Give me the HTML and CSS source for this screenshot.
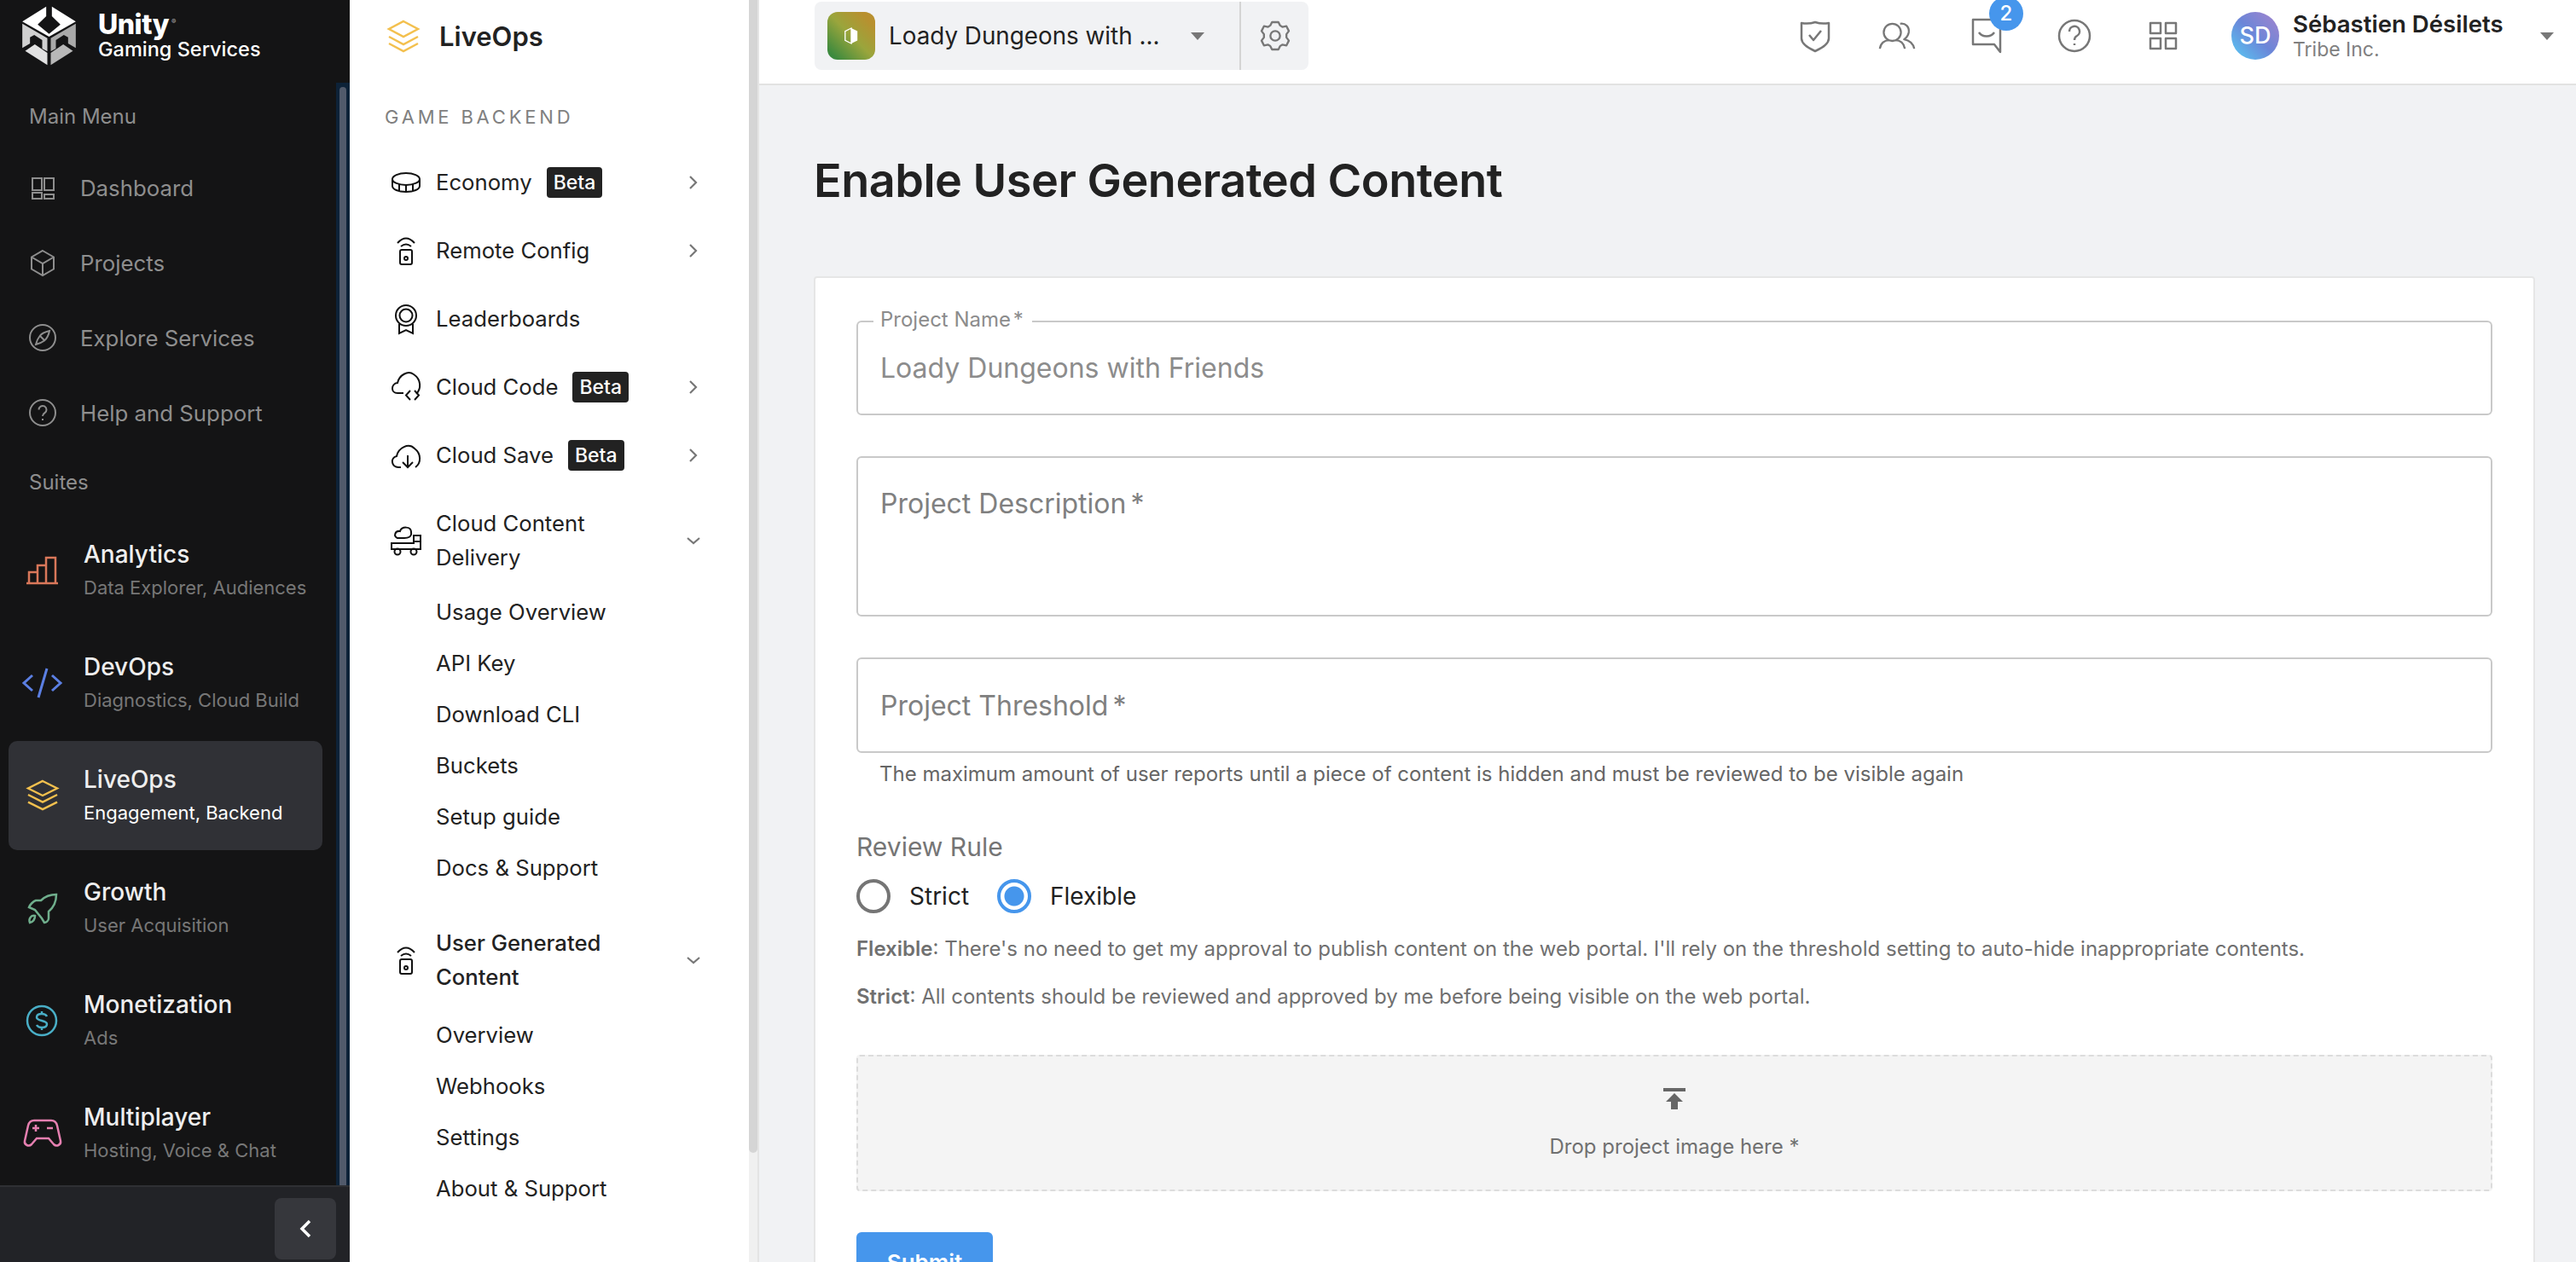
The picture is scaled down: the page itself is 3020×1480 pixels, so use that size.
FILE: index.html
```html
<!DOCTYPE html>
<html lang="en">
<head>
    <meta charset="UTF-8">
    <title>Enable User Generated Content</title>
    <link rel="stylesheet" href="styles.css">
</head>
<body>
    <!-- Main sidebar -->
    <aside class="side">
        <div class="brand">
            <svg class="brand-logo" viewBox="18 20 188 210">
                <path fill="#fff" d="M18 75L102 22V56L72 85L112 118L152 85L122 56V22L206 75L112 128Z"/>
                <path fill="#d0d0d0" d="M18 82L106 133V180L88 170V140L60 122L45 130V152L18 168Z"/>
                <path fill="#a9a9a9" d="M206 82L118 133V180L136 170V140L164 122L179 130V152L206 168Z"/>
                <path fill="#e2e2e2" d="M28 178L62 155L106 185V228Z"/>
                <path fill="#b8b8b8" d="M196 178L162 155L118 185V228Z"/>
            </svg>
            <div class="brand-text">
                <span class="brand-name">Unity<sup class="brand-reg">®</sup></span>
                <span class="brand-sub">Gaming Services</span>
            </div>
        </div>

        <div class="side-scroll">
            <div class="side-label side-label-first">Main Menu</div>
            <a class="side-link">
                <svg viewBox="0 0 32 32" class="side-icon"><path d="M4 5h11v14H4zM18 5h11v14H18zM4 22h11v7H4zM18 24h11v5H18z"/></svg>
                Dashboard
            </a>
            <a class="side-link">
                <svg viewBox="0 0 32 32" class="side-icon"><path d="M16 2l13 7.500v14L16 31 3 23.500v-14zM3 9.500l13 7.500 13-7.500M16 17v14"/></svg>
                Projects
            </a>
            <a class="side-link">
                <svg viewBox="0 0 32 32" class="side-icon"><circle cx="16" cy="16" r="15"/><path d="M24 8c-1 5-3 9-6 11.500-2 1.500-6 3.500-10 4.500 1-4 3-8 5-10.500C15 11 20 9 24 8zM13 14l5 5"/></svg>
                Explore Services
            </a>
            <a class="side-link">
                <svg viewBox="0 0 32 32" class="side-icon"><circle cx="16" cy="16" r="15"/><path d="M11.500 12.500a4.500 4.500 0 1 1 7 3.700c-1.700 1.100-2.500 1.900-2.500 3.800M16 23v2"/></svg>
                Help and Support
            </a>
            <div class="side-label">Suites</div>

            <a class="suite">
                <svg viewBox="0 0 44 36" class="suite-icon" stroke="#d9775a"><path d="M3 33h37M6 33V20h10v13M16 33V12h10v21M26 33V3h11v30"/></svg>
                <div><div class="suite-name">Analytics</div><div class="suite-desc">Data Explorer, Audiences</div></div>
            </a>
            <a class="suite">
                <svg viewBox="0 0 44 36" class="suite-icon suite-icon-bold" stroke="#5b7fe3"><path d="M10 9L0 18l10 9M33 9l10 9-10 9M27 1L17 35"/></svg>
                <div><div class="suite-name">DevOps</div><div class="suite-desc">Diagnostics, Cloud Build</div></div>
            </a>
            <a class="suite suite-active">
                <svg viewBox="0 0 44 38" class="suite-icon" stroke="#f3c04e"><path d="M22 1l18 9-18 9-18-9zM4 18l18 9 18-9M4 27l18 9 18-9"/></svg>
                <div><div class="suite-name">LiveOps</div><div class="suite-desc">Engagement, Backend</div></div>
            </a>
            <a class="suite">
                <svg viewBox="0 0 44 36" class="suite-icon" stroke="#6fae8c"><path d="M38 2c0 8-3 15-9 20v8c0 3-3 5-5 5l-3-5-8-10-7-3c1-3 5-7 8-8h6c5-5 11-7 18-7zM7 35c-2-5 2-9 6-8 0 4-2 7-6 8z"/></svg>
                <div><div class="suite-name">Growth</div><div class="suite-desc">User Acquisition</div></div>
            </a>
            <a class="suite">
                <svg viewBox="0 0 44 36" class="suite-icon" stroke="#49aec6"><circle cx="21" cy="18" r="17"/><path d="M27 13c-1-2-3-3-6-3-3 0-6 1-6 4 0 5 12 3 12 8 0 3-3 4-6 4-3 0-5-1-6-3M21 7v3M21 26v3"/></svg>
                <div><div class="suite-name">Monetization</div><div class="suite-desc">Ads</div></div>
            </a>
            <a class="suite">
                <svg viewBox="0 0 44 36" class="suite-icon" stroke="#e57fb0"><path d="M12 3h20c4 0 6 2 7 6l4 18c1 5-5 7-8 4l-6-7H15l-6 7c-3 3-9 1-8-4L5 9c1-4 3-6 7-6zM10 12h8M14 8v8M27 12h7"/></svg>
                <div><div class="suite-name">Multiplayer</div><div class="suite-desc">Hosting, Voice &amp; Chat</div></div>
            </a>
        </div>

        <div class="side-foot">
            <button class="collapse">
                <svg viewBox="0 0 16 24" width="16" height="24"><path d="M13 3L4 12l9 9" fill="none" stroke="#fff" stroke-width="3.500"/></svg>
            </button>
        </div>
    </aside>

    <!-- Service sidebar -->
    <nav class="sub">
        <div class="sub-inner">
            <div class="sub-head">
                <svg viewBox="0 0 40 40" class="sub-logo"><path d="M20 3l17 9-17 9-17-9zM3 21l17 9 17-9M3 29l17 9 17-9"/></svg>
                LiveOps
            </div>
            <div class="sub-label">GAME BACKEND</div>

            <a class="item">
                <svg viewBox="0 0 36 36" class="item-icon"><ellipse cx="18" cy="14" rx="16" ry="7"/><path d="M2 14v8c0 4 7 7 16 7s16-3 16-7v-8M10 20v8M18 21v8M26 20v8"/></svg>
                <span>Economy</span><span class="beta">Beta</span>
                <svg viewBox="0 0 16 16" class="chev"><path d="M4 1l7 7-7 7"/></svg>
            </a>
            <a class="item">
                <svg viewBox="0 0 36 36" class="item-icon"><path d="M8 9Q18-2 28 9M12 13Q18 8 24 13"/><rect x="11" y="17" width="14" height="17" rx="2"/><circle cx="18" cy="27" r="2"/></svg>
                <span>Remote Config</span>
                <svg viewBox="0 0 16 16" class="chev"><path d="M4 1l7 7-7 7"/></svg>
            </a>
            <a class="item">
                <svg viewBox="0 0 36 36" class="item-icon"><circle cx="18" cy="14" r="12"/><circle cx="18" cy="14" r="7.500"/><path d="M10 24v11l8-4 8 4V24"/></svg>
                <span>Leaderboards</span>
            </a>
            <a class="item">
                <svg viewBox="0 0 36 36" class="item-icon"><path d="M15 25H8C0 25 0 14 8 13 10 4 20-2 27 3c9 6 9 17 3 23M23 22l-5 5.500 5 5.500M28 22l5 5.500-5 5.500"/></svg>
                <span>Cloud Code</span><span class="beta">Beta</span>
                <svg viewBox="0 0 16 16" class="chev"><path d="M4 1l7 7-7 7"/></svg>
            </a>
            <a class="item">
                <svg viewBox="0 0 36 36" class="item-icon"><path d="M12 32H9C1 32-1 21 7 19 9 9 21 3 28 10c8 6 8 17 1 22M20 18v14M14 26l6 6 6-6"/></svg>
                <span>Cloud Save</span><span class="beta">Beta</span>
                <svg viewBox="0 0 16 16" class="chev"><path d="M4 1l7 7-7 7"/></svg>
            </a>
            <a class="item item-open">
                <svg viewBox="0 0 36 36" class="item-icon"><path d="M8 15C3 13 5 6 11 7c2-6 13-6 13 1 1 6-4 7-8 7zM1 21h26V12h8v16H1zM27 19h8"/><circle cx="8" cy="31" r="3.500"/><circle cx="27" cy="31" r="3.500"/></svg>
                <span>Cloud Content Delivery</span>
                <svg viewBox="0 0 16 16" class="chev chev-down"><path d="M1 5l7 6 7-6"/></svg>
            </a>
            <div class="sublist">
                <a>Usage Overview</a>
                <a>API Key</a>
                <a>Download CLI</a>
                <a>Buckets</a>
                <a>Setup guide</a>
                <a>Docs &amp; Support</a>
            </div>
            <a class="item item-open item-current">
                <svg viewBox="0 0 36 36" class="item-icon"><path d="M8 9Q18-2 28 9M12 13Q18 8 24 13"/><rect x="11" y="17" width="14" height="17" rx="2"/><circle cx="18" cy="27" r="2"/></svg>
                <span>User Generated Content</span>
                <svg viewBox="0 0 16 16" class="chev chev-down"><path d="M1 5l7 6 7-6"/></svg>
            </a>
            <div class="sublist sublist-last">
                <a>Overview</a>
                <a>Webhooks</a>
                <a>Settings</a>
                <a>About &amp; Support</a>
            </div>
        </div>
        <div class="sub-scroll"><div class="sub-thumb"></div></div>
    </nav>

    <div class="main">
        <header class="top">
            <div class="picker">
                <div class="picker-left">
                    <div class="project-icon">
                        <svg viewBox="0 0 20 22" width="18" height="20"><path d="M10 1l8 4v12l-8 4z" fill="#fff"/><path d="M10 1L2 5v12l8 4z" fill="none" stroke="#fff" stroke-width="1.500"/></svg>
                    </div>
                    <span class="picker-name">Loady Dungeons with ...</span>
                    <span class="caret"></span>
                </div>
                <div class="picker-gear">
                    <svg viewBox="0 0 34 38" width="32" height="36" class="top-icon"><path d="M13 2h8l2 4c1 1 2 1 3 2l5-1 3 6-3 4v4l3 4-3 6-5-1c-1 1-2 1-3 2l-2 4h-8l-2-4c-1-1-2-1-3-2l-5 1-3-6 3-4v-4L0 13l3-6 5 1c1-1 2-1 3-2z"/><circle cx="17" cy="19" r="6"/></svg>
                </div>
            </div>

            <div class="top-right">
                <svg viewBox="0 0 36 38" width="36" height="38" class="top-icon icon-shield"><path d="M2 4c5 1 10 1 16-1 6 2 11 2 16 1v18c0 6-7 11-16 15C9 33 2 28 2 22z"/><path d="M11 18l5 6 9-11"/></svg>
                <svg viewBox="0 0 48 36" width="44" height="33" class="top-icon icon-users"><circle cx="18" cy="13" r="11"/><path d="M2 34c1-7 6-11 12-11M34 34c-1-7-6-11-12-11M28 2c7-1 12 4 11 11-1 5-3 7-6 9 7 1 12 6 13 12"/></svg>
                <div class="chat">
                    <svg viewBox="0 0 36 42" width="36" height="42" class="top-icon"><path d="M2 2h32v38l-7-9H2zM9 17c4 6 14 6 18 0"/></svg>
                    <span class="chat-badge">2</span>
                </div>
                <svg viewBox="0 0 40 40" width="40" height="40" class="top-icon icon-help"><circle cx="20" cy="20" r="18"/><path d="M14 15a6 6 0 1 1 9 5c-2 1-3 2-3 5M20 29v2"/></svg>
                <svg viewBox="0 0 34 34" width="34" height="34" class="top-icon icon-grid"><path d="M2 2h12v12H2zM20 2h12v12H20zM2 20h12v12H2zM20 20h12v12H20z"/></svg>
                <div class="user">
                    <div class="avatar">SD</div>
                    <div class="user-text">
                        <div class="user-name">Sébastien Désilets</div>
                        <div class="user-org">Tribe Inc.</div>
                    </div>
                    <span class="caret"></span>
                </div>
            </div>
        </header>

        <main class="content">
            <h1 class="title">Enable User Generated Content</h1>
            <form class="card">
                <div class="field field-name">
                    <span class="field-legend">Project Name <span class="req">*</span></span>
                    Loady Dungeons with Friends
                </div>
                <div class="field field-desc"><span>Project Description <span class="req">*</span></span></div>
                <div class="field field-threshold"><span>Project Threshold <span class="req">*</span></span></div>
                <p class="helper">The maximum amount of user reports until a piece of content is hidden and must be reviewed to be visible again</p>

                <div class="rule-title">Review Rule</div>
                <div class="radios">
                    <span class="radio"></span><span class="radio-label">Strict</span>
                    <span class="radio radio-on"></span><span class="radio-label">Flexible</span>
                </div>
                <p class="rule-note"><b>Flexible</b>: There's no need to get my approval to publish content on the web portal. I'll rely on the threshold setting to auto-hide inappropriate contents.</p>
                <p class="rule-note"><b>Strict</b>: All contents should be reviewed and approved by me before being visible on the web portal.</p>

                <div class="drop">
                    <svg viewBox="0 0 28 28" width="28" height="28"><path d="M1 2h26v4H1zM14 8l10 10h-6v9h-8v-9H4z" fill="#666"/></svg>
                    <span>Drop project image here *</span>
                </div>
                <button type="button" class="submit">Submit</button>
            </form>
        </main>
    </div>
</body>
</html>
```

FILE: styles.css
```css
* {
    box-sizing: border-box;
}
html, body {
    margin: 0;
    height: 1480px;
    overflow: hidden;
}
body {
    display: flex;
    font-family: Inter, "Liberation Sans", sans-serif;
    color: #222;
    background-color: #f1f2f4;
}
svg {
    flex: none;
    display: block;
    overflow: visible;
}

/* main sidebar */
.side {
    width: 410px;
    flex: none;
    height: 1480px;
    background-color: #141415;
    display: flex;
    flex-direction: column;
}
.brand {
    height: 97px;
    flex: none;
    display: flex;
    align-items: flex-start;
    padding: 7px 0 0 26px;
}
.brand-logo {
    width: 63px;
    height: 70px;
}
.brand-text {
    margin: 5px 0 0 26px;
    display: flex;
    flex-direction: column;
    color: #fff;
}
.brand-name {
    font-size: 32px;
    font-weight: 800;
    line-height: 34px;
    letter-spacing: -0.5px;
}
.brand-reg {
    font-size: 8px;
    font-weight: 400;
    line-height: 0;
    margin-left: 3px;
    color: #bbb;
}
.brand-sub {
    font-size: 23.500px;
    font-weight: 500;
    line-height: 24px;
}
.side-scroll {
    height: 1293px;
    flex: none;
    padding-right: 16px;
    background: linear-gradient(#0d2238, #0d2238) right top / 16px 100% no-repeat;
    position: relative;
}
.side-scroll::after {
    content: "";
    position: absolute;
    top: 5px;
    bottom: 0;
    right: 4px;
    width: 8px;
    border-radius: 4px 4px 0 0;
    background-color: #515a6b;
}
.side-label {
    color: #8e8e8e;
    font-size: 24px;
    line-height: 30px;
    padding-left: 34px;
    margin-top: 23px;
    margin-bottom: 24px;
}
.side-label-first {
    margin-top: 25px;
    margin-bottom: 24px;
}
.side-link {
    display: flex;
    align-items: center;
    height: 88px;
    padding-left: 34px;
    color: #8e8e8e;
    font-size: 25.800px;
    white-space: nowrap;
}
.side-icon {
    width: 32px;
    height: 32px;
    margin-right: 28px;
    fill: none;
    stroke: #8e8e8e;
    stroke-width: 2;
}
.suite {
    display: flex;
    align-items: center;
    height: 128px;
    margin: 0 16px 4px 10px;
    padding-left: 18px;
    border-radius: 10px;
}
.suite-active {
    background-color: #303136;
}
.suite-icon {
    width: 44px;
    height: 36px;
    margin-right: 26px;
    fill: none;
    stroke-width: 2.500;
}
.suite-icon-bold {
    stroke-width: 3;
}
.suite-name {
    color: #eee;
    font-size: 28px;
    line-height: 36px;
    font-weight: 500;
}
.suite-desc {
    color: #777;
    font-size: 22px;
    line-height: 34px;
    margin-top: 4px;
}
.suite-active .suite-desc {
    color: #fff;
}
.side-foot {
    flex: 1;
    background-color: #222327;
    border-top: 2px solid #2f3034;
    display: flex;
    justify-content: flex-end;
    padding: 13px 16px 0 0;
}
.collapse {
    width: 72px;
    height: 72px;
    border: none;
    border-radius: 8px;
    background-color: #36373c;
    display: flex;
    align-items: center;
    justify-content: center;
}

/* service sidebar */
.sub {
    width: 480px;
    flex: none;
    height: 1480px;
    background-color: #fff;
    display: flex;
    border-right: 2px solid #e4e4e4;
}
.sub-inner {
    width: 468px;
    flex: none;
    padding: 0 0 0 40px;
}
.sub-scroll {
    width: 10px;
    flex: none;
    background-color: #f0f0f0;
}
.sub-thumb {
    height: 1352px;
    background-color: #d5d5d5;
    border-radius: 0 0 5px 5px;
}
.sub-head {
    display: flex;
    align-items: center;
    height: 84px;
    font-size: 31px;
    font-weight: 600;
}
.sub-logo {
    width: 40px;
    height: 40px;
    margin: 0 22px 0 3px;
    fill: none;
    stroke: #f3c04e;
    stroke-width: 2.500;
}
.sub-label {
    color: #808080;
    font-size: 22px;
    letter-spacing: 3.800px;
    line-height: 30px;
    margin: 38px 0 22px 1px;
}
.item {
    display: flex;
    align-items: center;
    min-height: 80px;
    font-size: 25.700px;
    line-height: 40px;
    padding-right: 57px;
}
.item-icon {
    width: 36px;
    height: 36px;
    margin: 0 17px 0 8px;
    fill: none;
    stroke: #111;
    stroke-width: 2;
}
.item > span:first-of-type {
    flex: none;
}
.item-open {
    margin-top: 20px;
}
.item-open > span:first-of-type {
    width: 230px;
    flex: none;
}
.item-current {
    font-weight: 500;
    margin-top: 38px;
}
.beta {
    background-color: #222;
    color: #fff;
    font-size: 23px;
    font-weight: 500;
    line-height: 36px;
    border-radius: 4px;
    padding: 0 8px;
    margin-left: 17px;
}
.chev {
    margin-left: auto;
    width: 16px;
    height: 16px;
    fill: none;
    stroke: #777;
    stroke-width: 2.200;
}
.sublist {
    padding: 14px 0 0 61px;
}
.sublist-last {
    padding-top: 18px;
}
.sublist a {
    display: block;
    font-size: 25.700px;
    line-height: 60px;
}

/* top bar */
.main {
    flex: 1;
    min-width: 0;
    display: flex;
    flex-direction: column;
}
.top {
    height: 100px;
    flex: none;
    background-color: #fff;
    border-bottom: 2px solid #e2e2e2;
    display: flex;
    align-items: flex-start;
    justify-content: space-between;
    padding: 2px 0 0 65px;
}
.picker {
    display: flex;
    height: 80px;
    width: 579px;
    background-color: #f1f2f4;
    border-radius: 8px;
}
.picker-left {
    width: 500px;
    display: flex;
    align-items: center;
    padding-left: 15px;
    border-right: 2px solid #d4d4d4;
}
.project-icon {
    width: 56px;
    height: 56px;
    flex: none;
    border-radius: 12px;
    background: linear-gradient(45deg, #3c8a3e 10%, #9aa53c 50%, #b8902f 85%);
    display: flex;
    align-items: center;
    justify-content: center;
}
.picker-name {
    margin-left: 16px;
    font-size: 27.800px;
    width: 354px;
    flex: none;
    white-space: nowrap;
}
.caret {
    width: 0;
    height: 0;
    flex: none;
    border-left: 8px solid transparent;
    border-right: 8px solid transparent;
    border-top: 9px solid #777;
}
.picker-gear {
    flex: 1;
    display: flex;
    align-items: center;
    justify-content: center;
}
.top-icon {
    fill: none;
    stroke: #777;
    stroke-width: 2.500;
    stroke-linejoin: round;
}
.top-right {
    display: flex;
    align-items: center;
    height: 80px;
}
.icon-shield {
    margin-right: 56px;
}
.icon-users {
    margin-right: 65px;
}
.chat {
    position: relative;
    margin-right: 65px;
}
.chat-badge {
    position: absolute;
    top: -25px;
    right: -25px;
    width: 40px;
    height: 40px;
    border-radius: 50%;
    background-color: #4696ec;
    color: #fff;
    font-size: 24px;
    font-weight: 500;
    line-height: 40px;
    text-align: center;
}
.icon-help {
    margin-right: 67px;
}
.icon-grid {
    margin-right: 63px;
}
.user {
    display: flex;
    align-items: center;
    width: 404px;
}
.avatar {
    width: 56px;
    height: 56px;
    flex: none;
    border-radius: 50%;
    background: linear-gradient(225deg, #9a84cf 10%, #6b86d8 50%, #5db6ec 85%);
    color: #fff;
    font-size: 27px;
    font-weight: 500;
    line-height: 56px;
    text-align: center;
}
.user-text {
    margin-left: 16px;
    width: 290px;
    flex: none;
    padding-top: 2px;
}
.user-name {
    font-size: 27.600px;
    font-weight: 600;
    line-height: 30px;
}
.user-org {
    font-size: 23px;
    line-height: 30px;
    color: #808080;
}

/* content */
.content {
    flex: 1;
    padding: 0 48px 0 64px;
    overflow: hidden;
}
.title {
    margin: 78px 0 78px;
    font-size: 54px;
    line-height: 68px;
    font-weight: 600;
    letter-spacing: -0.5px;
    white-space: nowrap;
}
.card {
    background-color: #fff;
    border: 2px solid #e6e6e6;
    border-radius: 4px;
    padding: 50px 48px 40px;
}
.field {
    border: 2px solid #c9c9c9;
    border-radius: 6px;
    padding: 0 26px;
    font-size: 32px;
    color: #808080;
    position: relative;
    display: flex;
    align-items: center;
}
.req {
    margin-left: -4px;
}
.field-name {
    height: 111px;
    color: #8c8c8c;
}
.field-legend {
    position: absolute;
    left: 18px;
    top: -17px;
    background-color: #fff;
    padding: 0 10px 0 8px;
    font-size: 24px;
    line-height: 28px;
}
.field-desc {
    height: 188px;
    margin-top: 48px;
    align-items: flex-start;
    padding-top: 34px;
}
.field-threshold {
    height: 112px;
    margin-top: 48px;
}
.helper {
    margin: 10px 0 0 27px;
    font-size: 24px;
    line-height: 30px;
    color: #666;
}
.rule-title {
    margin-top: 50px;
    font-size: 30px;
    line-height: 40px;
    color: #757575;
}
.radios {
    display: flex;
    align-items: center;
    margin-top: 18px;
}
.radio {
    width: 40px;
    height: 40px;
    border-radius: 50%;
    border: 4px solid #757575;
    background-color: #fff;
    flex: none;
}
.radio-on {
    border-color: #4696ec;
    background: radial-gradient(circle, #4696ec 0 11px, #fff 12px);
}
.radio-label {
    font-size: 28px;
    margin: 0 33px 0 22px;
}
.rule-note {
    margin: 0;
    font-size: 24px;
    line-height: 32px;
    color: #707070;
    margin-top: 24px;
}
.rule-note b {
    font-weight: 600;
}
.radios + .rule-note {
    margin-top: 26px;
}
.drop {
    height: 160px;
    margin-top: 52px;
    background-color: #f4f4f4;
    border: 2px dashed #dcdcdc;
    border-radius: 4px;
    display: flex;
    flex-direction: column;
    align-items: center;
    color: #707070;
    font-size: 24px;
    padding-top: 35px;
}
.drop span {
    margin-top: 28px;
    line-height: 30px;
}
.submit {
    display: block;
    margin-top: 48px;
    width: 160px;
    height: 70px;
    border: none;
    border-radius: 6px;
    background-color: #4696ec;
    color: #fff;
    font-family: inherit;
    font-size: 26px;
    font-weight: 600;
}
```
